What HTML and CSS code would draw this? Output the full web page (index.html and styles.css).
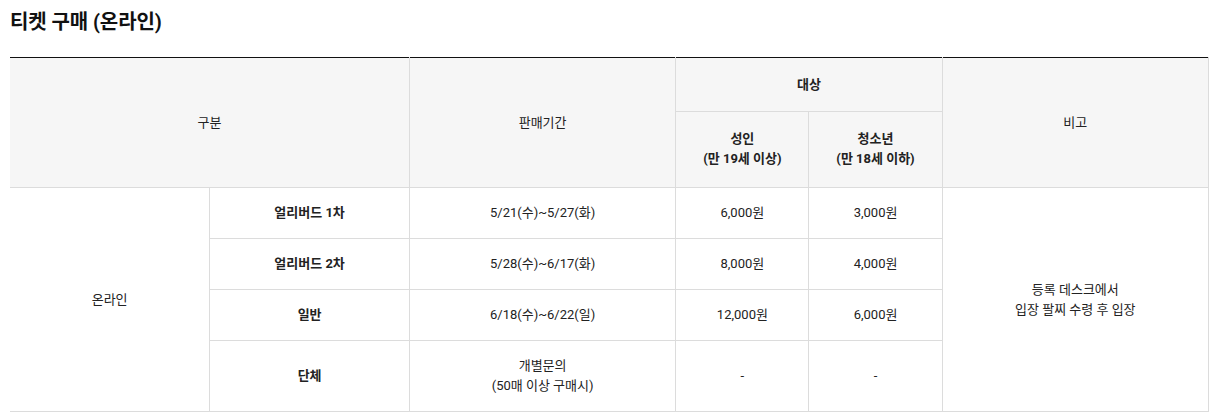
FILE: index.html
```html
<!DOCTYPE html>
<html lang="ko">
<head>
<meta charset="utf-8">
<title>티켓 구매 (온라인)</title>
<link rel="stylesheet" href="styles.css">
</head>
<body>
<div class="page">
  <h2 class="title">티켓 구매 (온라인)</h2>
  <table class="ticket">
    <colgroup>
      <col class="c-wide-s"><col class="c-wide-s"><col class="c-wide"><col class="c-narrow"><col class="c-narrow"><col class="c-wide">
    </colgroup>
    <thead>
      <tr class="head-first">
        <th colspan="2" rowspan="2">구분</th>
        <th rowspan="2">판매기간</th>
        <th colspan="2" class="h-top">대상</th>
        <th rowspan="2" class="last">비고</th>
      </tr>
      <tr>
        <th class="h-sub">성인<br>(만 19세 이상)</th>
        <th class="h-sub">청소년<br>(만 18세 이하)</th>
      </tr>
    </thead>
    <tbody>
      <tr>
        <td rowspan="4">온라인</td>
        <td class="strong">얼리버드 1차</td>
        <td>5/21(수)~5/27(화)</td>
        <td>6,000원</td>
        <td>3,000원</td>
        <td rowspan="4" class="last">등록 데스크에서<br>입장 팔찌 수령 후 입장</td>
      </tr>
      <tr>
        <td class="strong">얼리버드 2차</td>
        <td>5/28(수)~6/17(화)</td>
        <td>8,000원</td>
        <td>4,000원</td>
      </tr>
      <tr>
        <td class="strong">일반</td>
        <td>6/18(수)~6/22(일)</td>
        <td>12,000원</td>
        <td>6,000원</td>
      </tr>
      <tr>
        <td class="strong">단체</td>
        <td>개별문의<br>(50매 이상 구매시)</td>
        <td>-</td>
        <td>-</td>
      </tr>
    </tbody>
  </table>
</div>
</body>
</html>
```

FILE: styles.css
```css
html, body {
  margin: 0;
  padding: 0;
  background: #fff;
}
body {
  font-family: Roboto, "Noto Sans CJK KR", sans-serif;
  color: #222;
}
.page {
  padding: 0 9px 0 10px;
}
.title {
  margin: 0;
  padding-top: 8px;
  height: 57px;
  box-sizing: border-box;
  font-size: 20px;
  line-height: 28px;
  font-weight: 700;
  color: #111;
  letter-spacing: -0.1px;
}
.ticket {
  width: 1199px;
  border-collapse: collapse;
  table-layout: fixed;
  font-size: 13px;
  line-height: 20px;
  text-align: center;
}
.c-wide-s { width: 16.666%; }
.c-wide { width: 22.222%; }
.c-narrow { width: 11.111%; }
.ticket th,
.ticket td {
  border: 1px solid #dcdcdc;
  padding: 15px 8px 15px;
  vertical-align: middle;
}
.ticket tr > :first-child {
  border-left: none;
}
.ticket .head-first th {
  border-top: 1px solid #111;
}
.ticket th {
  background: #f6f6f6;
  font-weight: 400;
  color: #222;
}
.ticket th.h-top {
  height: 54px;
  box-sizing: border-box;
  font-weight: 700;
}
.ticket th.h-sub {
  font-weight: 700;
  padding: 17px 8px 18px;
}
.ticket td.strong {
  font-weight: 700;
}
```
